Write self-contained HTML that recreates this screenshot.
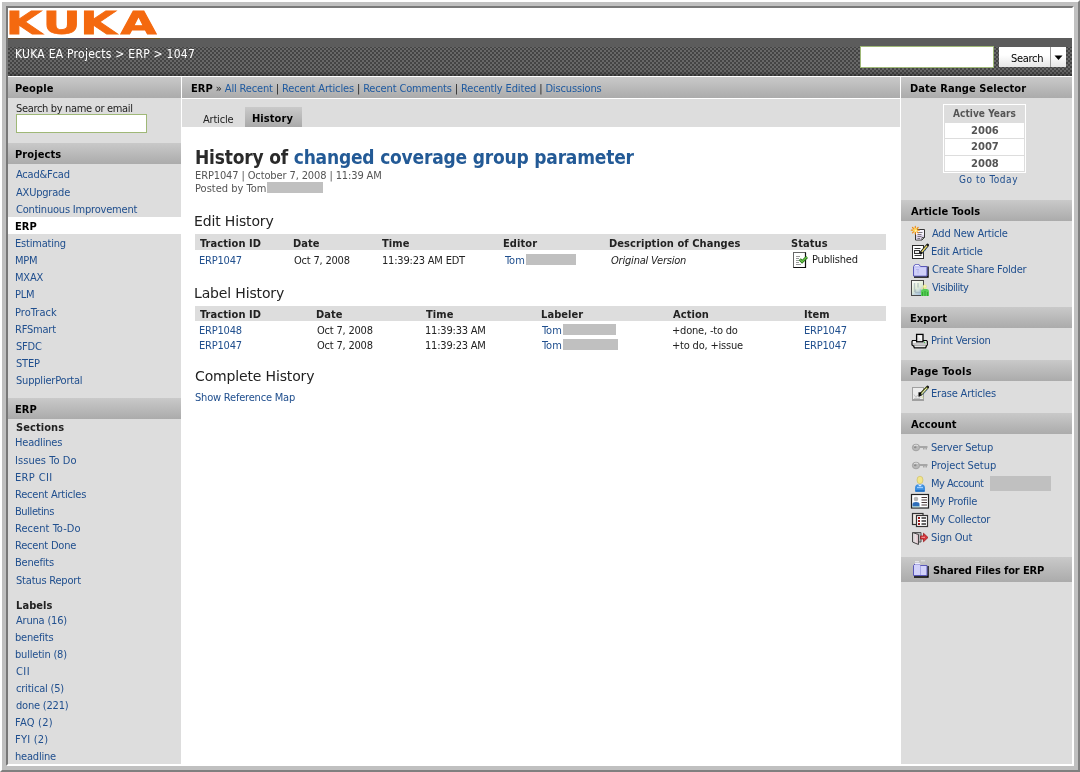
<!DOCTYPE html>
<html lang="en"><head><meta charset="utf-8"><title>History of changed coverage group parameter - ERP</title>
<style>
*{margin:0;padding:0;box-sizing:border-box}
html,body{width:1080px;height:772px;overflow:hidden;background:#fff}
body{font-family:"DejaVu Sans Condensed","DejaVu Sans","Liberation Sans",sans-serif;font-stretch:condensed;font-size:11px;color:#222;position:relative}
a{color:#204f8e;text-decoration:none}
.nav a{color:#1f5aa0}
#page{position:absolute;left:0;top:0;width:1080px;height:772px;will-change:transform}
.abs{position:absolute}
.t{position:absolute;white-space:nowrap;line-height:13px;height:13px;font-size:11px;letter-spacing:-0.2px}
.b{font-weight:bold;letter-spacing:0.08px;color:#000}
.hd{position:absolute;height:21px;background:linear-gradient(#c9c9c9,#ababab)}
.h2{position:absolute;white-space:nowrap;font-family:"DejaVu Sans","Liberation Sans",sans-serif;font-stretch:normal;font-size:14px;line-height:17px;height:17px;letter-spacing:-0.15px;font-weight:normal;color:#222}
.th{position:absolute;height:16px;background:#ddd}
.red{position:absolute;background:#c0c0c0}
.ico{position:absolute}
</style></head><body>
<div id="page">
<div class="abs" style="left:0px;top:0px;width:1080px;height:772px;border-style:solid;border-width:2px;border-color:#fff #808080 #808080 #fff"></div>
<div class="abs" style="left:2px;top:2px;width:1076px;height:768px;border:4px solid #c0c0c0"></div>
<div class="abs" style="left:6px;top:6px;width:1068px;height:760px;border-style:solid;border-width:2px;border-color:#787878 #fff #fff #787878"></div>
<svg class="abs" style="left:0;top:0" width="170" height="38" viewBox="0 0 170 38" role="img" aria-label="KUKA"><text transform="translate(0,33.7) scale(1.43,1)" x="3.99 29.87 56.09 84.3" y="0" font-family="DejaVu Sans, Liberation Sans, sans-serif" font-stretch="normal" font-weight="bold" font-size="32.6" fill="#f4690f" stroke="#f4690f" stroke-width="0.8">KUKA</text></svg>
<div class="abs" style="left:8px;top:38px;width:1064px;height:9px;background:#5c5c5c"></div>
<div class="abs" style="left:8px;top:47px;width:1064px;height:29px;background:linear-gradient(rgba(0,0,0,0) 24px,rgba(0,0,0,.3)),repeating-conic-gradient(#686868 0% 25%,#444 0% 50%) 0 1px/4px 4px"></div>
<div class="abs" style="left:8px;top:38px;width:152px;height:1px;background:linear-gradient(90deg,#6b4a2a,#3d5a70 35%,#7a3040 65%,#6a5a20)"></div>
<div class="t" style="left:15px;top:48px;font-size:12px;letter-spacing:0.26px;color:#fff;line-height:14px;height:14px;top:47px">KUKA EA Projects &gt; ERP &gt; 1047</div>
<div class="abs" style="left:860px;top:46px;width:134px;height:22px;background:#fff;border:1px solid #9fb877"></div>
<div class="abs" style="left:999px;top:47px;width:52px;height:20px;background:linear-gradient(#fff 40%,#e6e6e6);border-right:1px solid #999"></div>
<div class="abs" style="left:1051px;top:47px;width:15px;height:20px;background:linear-gradient(#fff 40%,#e6e6e6)"></div>
<div class="t" style="left:1011px;top:52px;color:#000;letter-spacing:-0.3px">Search</div>
<svg class="abs" style="left:1054px;top:55px" width="9" height="6" viewBox="0 0 9 6"><path d="M0.5 0.5h8l-4 4.5z" fill="#000"/></svg>
<div class="abs" style="left:8px;top:76px;width:1064px;height:1px;background:#fff"></div>
<div class="abs" style="left:8px;top:77px;width:173px;height:687px;background:#ddd"></div>
<div class="abs" style="left:901px;top:77px;width:171px;height:687px;background:#ddd"></div>
<div class="abs" style="left:182px;top:99px;width:718px;height:28px;background:#ddd"></div>
<div class="hd" style="left:8px;top:77px;width:173px;height:21px;"></div>
<div class="t b" style="left:15px;top:82px;">People</div>
<div class="t" style="left:16px;top:102px;color:#222;letter-spacing:-0.33px">Search by name or email</div>
<div class="abs" style="left:16px;top:114px;width:131px;height:19px;background:#fff;border:1px solid #9fb877"></div>
<div class="hd" style="left:8px;top:143px;width:173px;height:21px;"></div>
<div class="t b" style="left:15px;top:148px;">Projects</div>
<div class="abs" style="left:8px;top:217px;width:173px;height:17px;background:#fff"></div>
<div class="t" style="left:16px;top:168px;"><a href="#">Acad&amp;Fcad</a></div>
<div class="t" style="left:16px;top:186px;"><a href="#">AXUpgrade</a></div>
<div class="t" style="left:16px;top:203px;"><a href="#">Continuous Improvement</a></div>
<div class="t b" style="left:15px;top:220px;">ERP</div>
<div class="t" style="left:15px;top:237px;"><a href="#">Estimating</a></div>
<div class="t" style="left:15px;top:254px;"><a href="#">MPM</a></div>
<div class="t" style="left:15px;top:271px;"><a href="#">MXAX</a></div>
<div class="t" style="left:15px;top:288px;"><a href="#">PLM</a></div>
<div class="t" style="left:15px;top:306px;letter-spacing:0.05px;"><a href="#">ProTrack</a></div>
<div class="t" style="left:15px;top:323px;"><a href="#">RFSmart</a></div>
<div class="t" style="left:16px;top:340px;"><a href="#">SFDC</a></div>
<div class="t" style="left:16px;top:357px;"><a href="#">STEP</a></div>
<div class="t" style="left:16px;top:374px;"><a href="#">SupplierPortal</a></div>
<div class="hd" style="left:8px;top:398px;width:173px;height:21px;"></div>
<div class="t b" style="left:15px;top:403px;">ERP</div>
<div class="t b" style="left:16px;top:421px;color:#222">Sections</div>
<div class="t" style="left:15px;top:436px;"><a href="#">Headlines</a></div>
<div class="t" style="left:15px;top:454px;letter-spacing:0.05px;"><a href="#">Issues To Do</a></div>
<div class="t" style="left:15px;top:471px;letter-spacing:0.37px;"><a href="#">ERP CII</a></div>
<div class="t" style="left:15px;top:488px;"><a href="#">Recent Articles</a></div>
<div class="t" style="left:15px;top:505px;letter-spacing:-0.42px;"><a href="#">Bulletins</a></div>
<div class="t" style="left:15px;top:522px;letter-spacing:0.05px;"><a href="#">Recent To-Do</a></div>
<div class="t" style="left:15px;top:539px;"><a href="#">Recent Done</a></div>
<div class="t" style="left:15px;top:556px;"><a href="#">Benefits</a></div>
<div class="t" style="left:16px;top:574px;"><a href="#">Status Report</a></div>
<div class="t b" style="left:16px;top:599px;color:#222">Labels</div>
<div class="t" style="left:16px;top:614px;"><a href="#">Aruna (16)</a></div>
<div class="t" style="left:15px;top:631px;"><a href="#">benefits</a></div>
<div class="t" style="left:15px;top:648px;"><a href="#">bulletin (8)</a></div>
<div class="t" style="left:16px;top:665px;letter-spacing:0.45px;"><a href="#">CII</a></div>
<div class="t" style="left:16px;top:682px;"><a href="#">critical (5)</a></div>
<div class="t" style="left:16px;top:699px;"><a href="#">done (221)</a></div>
<div class="t" style="left:15px;top:716px;letter-spacing:0.23px;"><a href="#">FAQ (2)</a></div>
<div class="t" style="left:15px;top:733px;letter-spacing:0.23px;"><a href="#">FYI (2)</a></div>
<div class="t" style="left:15px;top:750px;"><a href="#">headline</a></div>
<div class="hd" style="left:182px;top:77px;width:718px;height:21px;"></div>
<div class="t nav" style="left:191px;top:82px;color:#222;letter-spacing:-0.15px"><b style="color:#000;letter-spacing:0.08px">ERP</b> » <a href="#">All Recent</a> | <a href="#">Recent Articles</a> | <a href="#">Recent Comments</a> | <a href="#">Recently Edited</a> | <a href="#">Discussions</a></div>
<div class="abs" style="left:245px;top:107px;width:57px;height:20px;background:linear-gradient(#cacaca,#a9a9a9)"></div>
<div class="t" style="left:203px;top:113px;">Article</div>
<div class="t b" style="left:252px;top:112px;">History</div>
<h1 class="abs" style="left:195px;top:146px;white-space:nowrap;font-size:19px;line-height:22px;height:22px;letter-spacing:-0.2px;font-weight:bold;color:#2a2a2a">History of <a href="#" style="color:#235a96">changed coverage group parameter</a></h1>
<div class="t" style="left:195px;top:169px;color:#555;letter-spacing:-0.12px">ERP1047 | October 7, 2008 | 11:39 AM</div>
<div class="t" style="left:195px;top:182px;color:#555;letter-spacing:0">Posted by Tom</div>
<div class="red" style="left:267px;top:182px;width:56px;height:11px;"></div>
<h2 class="h2" style="left:194px;top:213px">Edit History</h2>
<div class="th" style="left:195px;top:234px;width:691px;height:16px;"></div>
<div class="t b" style="left:200px;top:237px;color:#222">Traction ID</div>
<div class="t b" style="left:293px;top:237px;color:#222">Date</div>
<div class="t b" style="left:382px;top:237px;color:#222">Time</div>
<div class="t b" style="left:503px;top:237px;color:#222">Editor</div>
<div class="t b" style="left:609px;top:237px;color:#222">Description of Changes</div>
<div class="t b" style="left:791px;top:237px;color:#222">Status</div>
<div class="t" style="left:199px;top:254px;"><a href="#">ERP1047</a></div>
<div class="t" style="left:294px;top:254px;">Oct 7, 2008</div>
<div class="t" style="left:382px;top:254px;">11:39:23 AM EDT</div>
<div class="t" style="left:505px;top:254px;letter-spacing:-0.05px;"><a href="#">Tom</a></div>
<div class="red" style="left:526px;top:254px;width:50px;height:11px;"></div>
<div class="t" style="left:611px;top:254px;font-style:italic">Original Version</div>
<div class="t" style="left:812px;top:253px;">Published</div>
<h2 class="h2" style="left:194px;top:285px">Label History</h2>
<div class="th" style="left:195px;top:306px;width:691px;height:15px;"></div>
<div class="t b" style="left:200px;top:308px;color:#222">Traction ID</div>
<div class="t b" style="left:316px;top:308px;color:#222">Date</div>
<div class="t b" style="left:426px;top:308px;color:#222">Time</div>
<div class="t b" style="left:541px;top:308px;color:#222">Labeler</div>
<div class="t b" style="left:673px;top:308px;color:#222">Action</div>
<div class="t b" style="left:804px;top:308px;color:#222">Item</div>
<div class="t" style="left:199px;top:324px;"><a href="#">ERP1048</a></div>
<div class="t" style="left:317px;top:324px;">Oct 7, 2008</div>
<div class="t" style="left:425px;top:324px;">11:39:33 AM</div>
<div class="t" style="left:542px;top:324px;letter-spacing:-0.05px;"><a href="#">Tom</a></div>
<div class="red" style="left:563px;top:324px;width:53px;height:11px;"></div>
<div class="t" style="left:672px;top:324px;">+done, -to do</div>
<div class="t" style="left:804px;top:324px;"><a href="#">ERP1047</a></div>
<div class="t" style="left:199px;top:339px;"><a href="#">ERP1047</a></div>
<div class="t" style="left:317px;top:339px;">Oct 7, 2008</div>
<div class="t" style="left:425px;top:339px;">11:39:23 AM</div>
<div class="t" style="left:542px;top:339px;letter-spacing:-0.05px;"><a href="#">Tom</a></div>
<div class="red" style="left:563px;top:339px;width:55px;height:11px;"></div>
<div class="t" style="left:672px;top:339px;">+to do, +issue</div>
<div class="t" style="left:804px;top:339px;"><a href="#">ERP1047</a></div>
<h2 class="h2" style="left:195px;top:368px">Complete History</h2>
<div class="t" style="left:195px;top:391px;"><a href="#">Show Reference Map</a></div>
<div class="hd" style="left:901px;top:77px;width:171px;height:21px;"></div>
<div class="t b" style="left:910px;top:82px;">Date Range Selector</div>
<div class="abs" style="left:943px;top:104px;width:83px;height:69px;border:1px solid #fff"></div>
<div class="abs" style="left:945px;top:106px;width:79px;height:16px;background:#ddd"></div>
<div class="abs" style="left:945px;top:123px;width:79px;height:15px;background:#fff"></div>
<div class="abs" style="left:945px;top:139px;width:79px;height:16px;background:#fff"></div>
<div class="abs" style="left:945px;top:156px;width:79px;height:15px;background:#fff"></div>
<div class="t" style="left:953px;top:107px;font-weight:bold;font-size:10px;letter-spacing:0.05px;color:#555">Active Years</div>
<div class="t" style="left:971px;top:124px;font-family:'DejaVu Sans','Liberation Sans',sans-serif;font-stretch:normal;font-weight:bold;font-size:10px;letter-spacing:0;color:#555">2006</div>
<div class="t" style="left:971px;top:140px;font-family:'DejaVu Sans','Liberation Sans',sans-serif;font-stretch:normal;font-weight:bold;font-size:10px;letter-spacing:0;color:#555">2007</div>
<div class="t" style="left:971px;top:157px;font-family:'DejaVu Sans','Liberation Sans',sans-serif;font-stretch:normal;font-weight:bold;font-size:10px;letter-spacing:0;color:#555">2008</div>
<div class="t" style="left:959px;top:173px;font-size:10px;letter-spacing:0.54px"><a href="#">Go to Today</a></div>
<div class="hd" style="left:901px;top:200px;width:171px;height:21px;"></div>
<div class="t b" style="left:911px;top:205px;">Article Tools</div>
<div class="t" style="left:932px;top:227px;"><a href="#">Add New Article</a></div>
<div class="t" style="left:931px;top:245px;"><a href="#">Edit Article</a></div>
<div class="t" style="left:932px;top:263px;"><a href="#">Create Share Folder</a></div>
<div class="t" style="left:932px;top:281px;letter-spacing:-0.5px;"><a href="#">Visibility</a></div>
<div class="hd" style="left:901px;top:307px;width:171px;height:21px;"></div>
<div class="t b" style="left:910px;top:312px;">Export</div>
<div class="t" style="left:931px;top:334px;"><a href="#">Print Version</a></div>
<div class="hd" style="left:901px;top:360px;width:171px;height:21px;"></div>
<div class="t b" style="left:910px;top:365px;letter-spacing:0.28px;">Page Tools</div>
<div class="t" style="left:931px;top:387px;"><a href="#">Erase Articles</a></div>
<div class="hd" style="left:901px;top:413px;width:171px;height:21px;"></div>
<div class="t b" style="left:911px;top:418px;">Account</div>
<div class="t" style="left:931px;top:441px;"><a href="#">Server Setup</a></div>
<div class="t" style="left:931px;top:459px;letter-spacing:-0.05px;"><a href="#">Project Setup</a></div>
<div class="t" style="left:931px;top:477px;letter-spacing:-0.5px;"><a href="#">My Account</a></div>
<div class="t" style="left:931px;top:495px;"><a href="#">My Profile</a></div>
<div class="t" style="left:931px;top:513px;"><a href="#">My Collector</a></div>
<div class="t" style="left:931px;top:531px;"><a href="#">Sign Out</a></div>
<div class="red" style="left:990px;top:476px;width:61px;height:15px;"></div>
<div class="hd" style="left:901px;top:557px;width:171px;height:25px;"></div>
<div class="t b" style="left:933px;top:564px;letter-spacing:-0.12px">Shared Files for ERP</div>
<!-- add new article -->
<svg class="ico" style="left:910px;top:225px" viewBox="0 0 18 18" width="18" height="18">
<path d="M5.500 4.500h9v8l-2.500 2.500h-6.500z" fill="#f6f2fb" stroke="#333" stroke-width="1"/>
<path d="M6 10h8v2.500l-2 2h-6z" fill="#d6cbe6" opacity=".75"/>
<path d="M7.500 7.500h5M7.500 9.500h4M7.500 11.500h4M7.500 13.500h2.500" stroke="#7a7480" stroke-width="1"/>
<path d="M12 15v-2.500h2.500z" fill="#fff" stroke="#333" stroke-width=".8"/>
<g stroke="#ef8d14" stroke-width="1.200" stroke-linecap="round"><path d="M5.300 1.400v7.600M1.300 5.200h8M2.500 2.500l5.600 5.400M8.100 2.500l-5.600 5.400"/></g>
<circle cx="5.300" cy="5.200" r="2.100" fill="#ffd65a"/>
<circle cx="5.800" cy="5.700" r="1" fill="#fff3b0"/>
</svg>
<!-- edit article -->
<svg class="ico" style="left:911px;top:243px" viewBox="0 0 18 18" width="18" height="18">
<rect x="1.5" y="2.5" width="11" height="13" fill="#fff" stroke="#2a2a2a" stroke-width="1"/>
<path d="M3.5 5.5h6M3.5 12.5h7" stroke="#333" stroke-width="1"/>
<rect x="3.5" y="7.5" width="5" height="3" fill="#eee" stroke="#333" stroke-width="1"/>
<path d="M16.5 2.2L10 9.8" stroke="#1a1a1a" stroke-width="3" stroke-linecap="round"/>
<path d="M16 2.8L10.8 9" stroke="#e8d86a" stroke-width="1.4"/>
<path d="M15.8 5.2L12.2 9.4" stroke="#2b6fc0" stroke-width="1" stroke-dasharray="1 1.4"/>
<path d="M9 11.5l.6-2.6 1.9 1.6z" fill="#111"/>
</svg>
<!-- create share folder -->
<svg class="ico" style="left:912px;top:263px" viewBox="0 0 18 15" width="18" height="15">
<path d="M2 14h14v-10.500" fill="none" stroke="#000" stroke-width="1.400"/>
<path d="M1.500 3.500l1.500-2h4l1.500 2h6.500v9.500h-13.500z" fill="#c6c6f6" stroke="#5a58b8" stroke-width="1"/>
<path d="M3.200 2.300h3.600" stroke="#fff" stroke-width="1"/>
<path d="M2.500 5h11.500v7.500h-11.500z" fill="#d4d4fb" opacity=".7"/>
<path d="M4 6.500h3M6 6.500v4" stroke="#b0b0ea" stroke-width="1" opacity=".8"/>
</svg>
<!-- visibility -->
<svg class="ico" style="left:910px;top:279px" viewBox="0 0 20 18" width="20" height="18">
<defs><linearGradient id="gv" x1="0" y1="0" x2=".6" y2="1"><stop offset="0" stop-color="#fff"/><stop offset=".55" stop-color="#e4efd9"/><stop offset="1" stop-color="#a9c4e2"/></linearGradient></defs>
<rect x="1.500" y="1.500" width="12" height="15" fill="url(#gv)" stroke="#4a4a4a" stroke-width="1"/>
<path d="M4.500 4v9M8 4v4.500M5.500 10.500v3h5v-3" stroke="#8fa3ad" stroke-width="1.400" opacity=".55" fill="none"/>
<path d="M11 17v-4.500q0-2.500 2-2.500h4q2 0 2 2.500v4.500z" fill="#55cf55"/>
<path d="M12.500 17v-4M15 17v-5M17.500 17v-4" stroke="#2f9a2f" stroke-width="1" opacity=".8"/>
<ellipse cx="14.800" cy="7.700" rx="1.900" ry="2.300" fill="#e6e68c"/>
<ellipse cx="14.800" cy="7.200" rx="1" ry="1.200" fill="#f6f6b0"/>
<circle cx="12.200" cy="9.200" r="1.300" fill="#dfe6a8" opacity=".8"/>
</svg>
<!-- print -->
<svg class="ico" style="left:911px;top:333px" viewBox="0 0 18 16" width="18" height="16">
<path d="M1.500 7.500h14l.8 1v3.500l-1.300 1h-12.700l-1.300-1v-3.500z" fill="#f2f2f2" stroke="#000" stroke-width="1.200"/>
<path d="M2.500 12.500l.8 2.300h11.400l.8-2.300" fill="#e4e4e4" stroke="#000" stroke-width="1.200"/>
<path d="M2 11h14" stroke="#bbb" stroke-width="1.500"/>
<rect x="5.600" y="1.400" width="6.400" height="7.400" fill="#e8e8e8" stroke="#000" stroke-width="1.300"/>
<path d="M6.500 2.500l4.500 5.500v-5.500z" fill="#fff" opacity=".7"/>
<circle cx="13.600" cy="9.400" r=".8" fill="#4caf50"/>
</svg>
<!-- erase -->
<svg class="ico" style="left:911px;top:385px" viewBox="0 0 18 18" width="18" height="18">
<rect x="1.500" y="2.500" width="11" height="13" fill="#ececec" stroke="#a0a0a0" stroke-width="1"/>
<path d="M1 15h12" stroke="#a0a0a0" stroke-width="2"/>
<path d="M3 9.500l2 3 1.500-2.500 1 2h3M3 13.500h6" stroke="#c4c4c4" stroke-width="1" fill="none"/>
<path d="M12.500 13.500l-2-.5 1-3z" fill="#dce6b0"/>
<path d="M16.500 2.200L9.500 9.500" stroke="#1a1a1a" stroke-width="3" stroke-linecap="round"/>
<path d="M16.300 2.500L10 9.200" stroke="#74801e" stroke-width="2.200"/>
<path d="M15.800 3.300L10.500 9" stroke="#fff" stroke-width="1"/>
<path d="M16.200 4.800L11.600 10" stroke="#2b6fc0" stroke-width="1" stroke-dasharray="1 1.600"/>
<path d="M8.200 11.500v-3.500l2 .2" fill="none" stroke="#000" stroke-width="1.400"/>
</svg>
<!-- keys -->
<svg class="ico" style="left:911px;top:441px" viewBox="0 0 18 12" width="18" height="12">
<ellipse cx="5" cy="6.500" rx="3.600" ry="3.300" fill="#b9b9b9" stroke="#a2a2a2" stroke-width="1"/>
<ellipse cx="4.200" cy="6.300" rx="1.300" ry="1" fill="#8c8c8c"/>
<path d="M3 4.800q2-1.500 4 0" stroke="#e2e2e2" stroke-width="1" fill="none"/>
<path d="M8 6h8.500" stroke="#a6a6a6" stroke-width="2"/><path d="M12.800 6.500v2M15.200 6.500v2" stroke="#a6a6a6" stroke-width="1.600"/>
</svg>
<svg class="ico" style="left:911px;top:459px" viewBox="0 0 18 12" width="18" height="12">
<ellipse cx="5" cy="6.500" rx="3.600" ry="3.300" fill="#b9b9b9" stroke="#a2a2a2" stroke-width="1"/>
<ellipse cx="4.200" cy="6.300" rx="1.300" ry="1" fill="#8c8c8c"/>
<path d="M3 4.800q2-1.500 4 0" stroke="#e2e2e2" stroke-width="1" fill="none"/>
<path d="M8 6h8.500" stroke="#a6a6a6" stroke-width="2"/><path d="M12.800 6.500v2M15.200 6.500v2" stroke="#a6a6a6" stroke-width="1.600"/>
</svg>
<!-- my account -->
<svg class="ico" style="left:912px;top:475px" viewBox="0 0 16 18" width="16" height="18">
<path d="M3 16.500v-3.500q0-4 5-4t5 4v3.500z" fill="#3d8fe0"/>
<path d="M3.500 16h9" stroke="#1f6cc0" stroke-width="1.600"/>
<path d="M5 12.500h6" stroke="#9fd0ff" stroke-width="1.400"/>
<path d="M5.500 9.500l2.500 2 2.500-2z" fill="#e8f2ff"/>
<ellipse cx="8" cy="5" rx="3" ry="3.800" fill="#f1e58c" stroke="#c9b85a" stroke-width=".6"/>
</svg>
<!-- my profile -->
<svg class="ico" style="left:910px;top:493px" viewBox="0 0 20 16" width="20" height="16">
<rect x="1.500" y="1.500" width="17" height="13.500" fill="#fff" stroke="#222" stroke-width="1.200"/>
<circle cx="6" cy="6" r="2.300" fill="#b5b5b5"/>
<path d="M2.500 13.500v-2.500q0-2 3.500-2t3.500 2v2.500z" fill="#2f6fba"/>
<path d="M2.500 13.800h7" stroke="#9cc" stroke-width="1"/>
<path d="M11.500 4.500h5.500M11.500 7h5.500M11.500 9.500h5.500M11.500 12h5.500" stroke="#4a3a3a" stroke-width="1.200"/>
</svg>
<!-- my collector -->
<svg class="ico" style="left:911px;top:512px" viewBox="0 0 18 16" width="18" height="16">
<rect x="1.500" y="1.500" width="10.500" height="11" fill="#f1ece6" stroke="#333" stroke-width="1.200"/>
<rect x="5.500" y="3.500" width="11" height="11" fill="#fff" stroke="#333" stroke-width="1.200"/>
<path d="M7 5h2v2h-2zM7 8h2v2h-2zM7 11h2v2h-2z" fill="#9b1c1c"/>
<path d="M10.500 6h4.500M10.500 9h4.500M10.500 12h4.500" stroke="#333" stroke-width="1.400"/>
</svg>
<!-- sign out -->
<svg class="ico" style="left:911px;top:530px" viewBox="0 0 18 16" width="18" height="16">
<defs><linearGradient id="gd" x1="0" y1="0" x2="1" y2="0"><stop offset="0" stop-color="#c9c9c9"/><stop offset=".5" stop-color="#eadfe2"/><stop offset="1" stop-color="#d9b8c0"/></linearGradient></defs>
<path d="M2 2.500h8v9.500h-8z" fill="#b8b8b8" stroke="#555" stroke-width="1"/>
<path d="M1.500 2.500l6 2v10l-6-2.500z" fill="url(#gd)" stroke="#444" stroke-width="1"/>
<path d="M9.500 6h3v-2.800l4.500 4.300-4.500 4.300v-2.800h-3z" fill="#d8353a" stroke="#9c1c20" stroke-width=".8"/>
<path d="M10.500 7.300h3.500" stroke="#f4a4a4" stroke-width="1"/>
</svg>
<!-- shared files folder -->
<svg class="ico" style="left:912px;top:560px" viewBox="0 0 18 18" width="18" height="18">
<path d="M2 17h14v-11" fill="none" stroke="#000" stroke-width="1.400"/>
<path d="M1.500 5.500l1.500-1.500h4l1.500 1.500h6.500v10h-13.500z" fill="#d2d2fa" stroke="#5a58b8" stroke-width="1"/>
<path d="M3 3.500h4l1 .8" stroke="#ececff" stroke-width="1.400" fill="none"/>
<path d="M3 1.500h4M9 .8h4" stroke="#eee" stroke-width="1" opacity=".8"/>
<path d="M8.500 6v9" stroke="#a8a8e8" stroke-width="1"/>
</svg>
<!-- published -->
<svg class="ico" style="left:792px;top:251px" viewBox="0 0 18 18" width="18" height="18">
<rect x="1.500" y="1.500" width="12" height="15" fill="#fff" stroke="#666" stroke-width="1"/>
<path d="M1.500 16.500h12v-15" fill="none" stroke="#111" stroke-width="1.200"/>
<path d="M4 5.500h4M4 7.500h3M4 9.500h3M4 11.500h3M4 13.500h5" stroke="#999" stroke-width="1"/>
<path d="M7.800 8.300l2.300 2.500 4.900-4.800" fill="none" stroke="#1d6b12" stroke-width="2.800"/>
<path d="M8 8.500l2.100 2.200 4.700-4.600" fill="none" stroke="#6cc24a" stroke-width="1.400"/>
</svg>

</div>
</body></html>
